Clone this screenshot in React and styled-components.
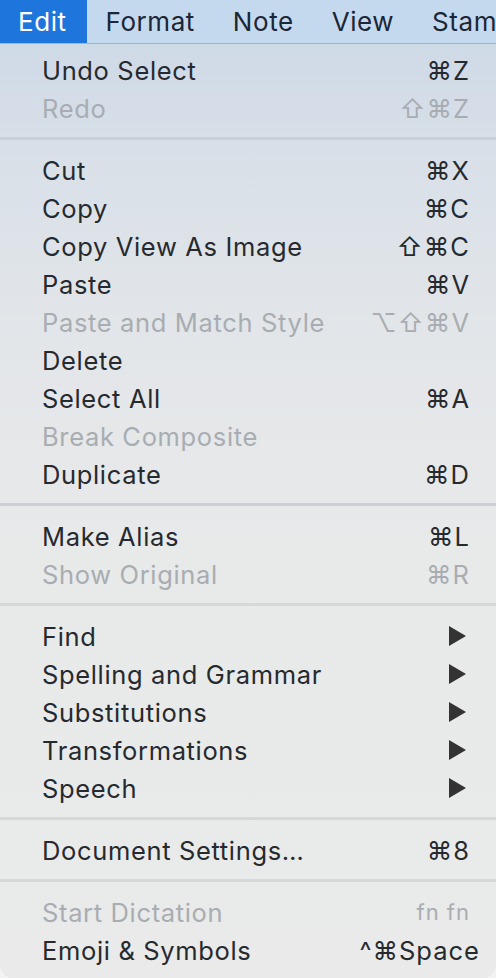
import React from "react";
import styled, { createGlobalStyle } from "styled-components";

const GlobalStyle = createGlobalStyle`
  html, body { margin: 0; padding: 0; background: #f3f3f3; }
  body { font-family: Inter, "DejaVu Sans", sans-serif; -webkit-font-smoothing: antialiased; }
`;

const Page = styled.div`
  width: 496px;
  height: 978px;
  overflow: hidden;
  display: flex;
  flex-direction: column;
`;

const MenuBar = styled.div`
  height: 43px;
  display: flex;
  align-items: stretch;
  background: #c4d9ed;
  border-bottom: 1px solid #a6b6c7;
  flex-shrink: 0;
`;

const BarItem = styled.div`
  display: flex;
  align-items: center;
  padding: 0 ${(p) => (p.$first ? "20px" : "19px")} 0 ${(p) => (p.$first ? "18px" : "19px")};
  font-size: 26px;
  letter-spacing: 0.55px;
  color: ${(p) => (p.$active ? "#ffffff" : "#1b2636")};
  background: ${(p) => (p.$active ? "#1e75dc" : "transparent")};
  white-space: nowrap;
`;

const Menu = styled.div`
  flex: 1;
  display: flex;
  flex-direction: column;
  padding: 7px 0 9px;
  border-radius: 0 0 13px 13px;
  background: linear-gradient(
    180deg,
    #cfdae7 0px,
    #d9e0e8 120px,
    #e3e6e9 300px,
    #e8e9e9 500px,
    #e9eae9 100%
  );
`;

const Row = styled.div`
  height: 38px;
  display: flex;
  align-items: center;
  padding: 0 ${(p) => (p.$wide ? "16px" : "26px")} 0 42px;
  font-size: 25.5px;
  letter-spacing: 0.65px;
  color: ${(p) => (p.$disabled ? "#a8adb2" : "#262a2f")};
  white-space: nowrap;
`;

const Label = styled.span`
  flex: 1;
`;

const Shortcut = styled.span`
  font-family: Inter, "DejaVu Sans", sans-serif;
  letter-spacing: 1px;
  font-size: ${(p) => (p.$small ? "22px" : "25.5px")};
`;

const Sep = styled.div`
  height: 3px;
  margin: 10px 0 11px;
  background: ${(p) => (p.$tone === "blue" ? "#c8cfd8" : "#d6d8d8")};
`;

const Arrow = styled.svg`
  width: 17px;
  height: 20px;
  margin-right: 4px;
  fill: #333333;
`;

const Submenu = () => (
  <Arrow viewBox="0 0 17 20">
    <polygon points="0,0 17,10 0,20" />
  </Arrow>
);

const sections = [
  {
    tone: "blue",
    items: [
      { label: "Undo Select", key: "⌘Z" },
      { label: "Redo", key: "⇧⌘Z", disabled: true },
    ],
  },
  {
    tone: "blue",
    items: [
      { label: "Cut", key: "⌘X" },
      { label: "Copy", key: "⌘C" },
      { label: "Copy View As Image", key: "⇧⌘C" },
      { label: "Paste", key: "⌘V" },
      { label: "Paste and Match Style", key: "⌥⇧⌘V", disabled: true },
      { label: "Delete" },
      { label: "Select All", key: "⌘A" },
      { label: "Break Composite", disabled: true },
      { label: "Duplicate", key: "⌘D" },
    ],
  },
  {
    tone: "grey",
    items: [
      { label: "Make Alias", key: "⌘L" },
      { label: "Show Original", key: "⌘R", disabled: true },
    ],
  },
  {
    tone: "grey",
    items: [
      { label: "Find", sub: true },
      { label: "Spelling and Grammar", sub: true },
      { label: "Substitutions", sub: true },
      { label: "Transformations", sub: true },
      { label: "Speech", sub: true },
    ],
  },
  {
    tone: "grey",
    items: [{ label: "Document Settings…", key: "⌘8" }],
  },
  {
    items: [
      { label: "Start Dictation", key: "fn fn", disabled: true, small: true },
      { label: "Emoji & Symbols", key: "^⌘Space", wide: true },
    ],
  },
];

export default function App() {
  return (
    <Page>
      <GlobalStyle />
      <MenuBar>
        <BarItem $active $first>Edit</BarItem>
        <BarItem>Format</BarItem>
        <BarItem>Note</BarItem>
        <BarItem>View</BarItem>
        <BarItem>Stamp</BarItem>
      </MenuBar>
      <Menu>
        {sections.map((s, si) => (
          <React.Fragment key={si}>
            {s.items.map((it) => (
              <Row key={it.label} $disabled={it.disabled} $wide={it.wide}>
                <Label>{it.label}</Label>
                {it.key && <Shortcut $small={it.small}>{it.key}</Shortcut>}
                {it.sub && <Submenu />}
              </Row>
            ))}
            {si < sections.length - 1 && <Sep $tone={s.tone} />}
          </React.Fragment>
        ))}
      </Menu>
    </Page>
  );
}
